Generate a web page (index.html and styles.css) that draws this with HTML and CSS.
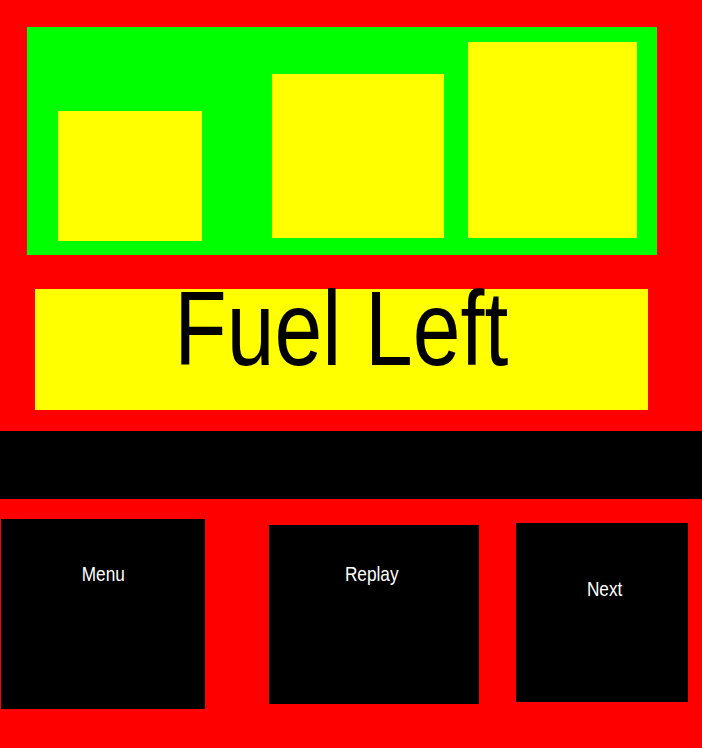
FILE: index.html
```html
<!DOCTYPE html>
<html>
<head>
<meta charset="utf-8">
<link rel="stylesheet" href="styles.css">
</head>
<body>
<div class="screen">
  <div class="gauges">
    <div class="tank tank-1"></div>
    <div class="tank tank-2"></div>
    <div class="tank tank-3"></div>
  </div>
  <div class="banner"><span class="banner-text">Fuel Left</span></div>
  <div class="bar"></div>
  <div class="buttons">
    <div class="btn btn-menu"><span class="label">Menu</span></div>
    <div class="btn btn-replay"><span class="label">Replay</span></div>
    <div class="btn btn-next"><span class="label">Next</span></div>
  </div>
</div>
</body>
</html>
```
FILE: styles.css
```css
html, body {
  margin: 0;
  padding: 0;
  background: #ff0000;
}
body {
  width: 702px;
  height: 748px;
  overflow: hidden;
  font-family: "Liberation Sans", Arial, sans-serif;
}
.screen {
  display: flex;
  flex-direction: column;
  padding-top: 27px;
}
.gauges {
  margin-left: 27px;
  width: 630px;
  height: 228px;
  background: #00ff00;
  display: flex;
  align-items: flex-end;
  box-sizing: border-box;
  padding-bottom: 14px;
}
.tank {
  background: #ffff00;
}
.tank-1 {
  margin-left: 31px;
  width: 144px;
  height: 130px;
}
.tank-2 {
  margin-left: 70px;
  width: 172px;
  height: 164px;
  margin-bottom: 3px;
}
.tank-3 {
  margin-left: 24px;
  width: 169px;
  height: 196px;
  margin-bottom: 3px;
}
.banner {
  margin-top: 34px;
  margin-left: 35px;
  width: 613px;
  height: 121px;
  background: #ffff00;
  text-align: center;
}
.banner-text {
  display: inline-block;
  font-size: 106px;
  line-height: 106px;
  margin-top: -14px;
  color: #000;
  transform: scaleX(0.81);
}
.bar {
  margin-top: 21px;
  height: 68px;
  background: #000;
}
.buttons {
  display: flex;
  align-items: flex-start;
}
.btn {
  background: #000;
  text-align: center;
  box-sizing: border-box;
}
.label {
  display: inline-block;
  color: #fff;
  font-size: 21px;
  line-height: 23px;
  transform: scaleX(0.82);
}
.btn-menu {
  margin-left: 1px;
  margin-top: 20px;
  width: 204px;
  height: 190px;
}
.btn-menu .label { margin-top: 43px; }
.btn-replay {
  margin-left: 64px;
  margin-top: 26px;
  width: 210px;
  height: 179px;
  padding-right: 5px;
}
.btn-replay .label { margin-top: 37px; }
.btn-next {
  margin-left: 37px;
  margin-top: 24px;
  width: 172px;
  height: 179px;
  padding-left: 5px;
}
.btn-next .label { margin-top: 54px; }
```
